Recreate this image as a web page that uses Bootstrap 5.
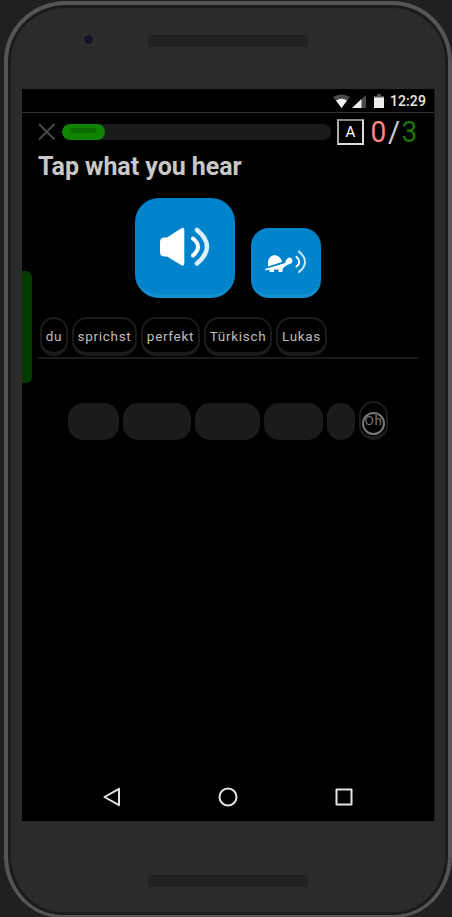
<!DOCTYPE html>
<html lang="en">
<head>
<meta charset="utf-8">
<meta name="viewport" content="width=device-width, initial-scale=1">
<title>Tap what you hear</title>
<link href="https://cdn.jsdelivr.net/npm/bootstrap@5.3.0/dist/css/bootstrap.min.css" rel="stylesheet">
<style>
body{background:#202022;font-family:Roboto,"Liberation Sans",sans-serif;width:452px;height:917px;overflow:hidden}
svg{display:block;flex:none}
.device{width:448px;height:917px;margin:1px 0 0 4px;border:4px solid #555;border-bottom-width:3px;border-radius:62px 60px 58px 58px / 60px 60px 62px 62px;background:#2b2b2b;box-shadow:inset 0 0 0 3px #1b1b1b;padding:0 14px}
.bezel-top{height:84px;padding:30px 0 0 126px}
.bezel-bottom{height:93px;padding:54px 0 0 126px}
.lens{left:72px;top:30px;width:9px;height:9px;background:#15112a;box-shadow:0 0 3px 2px #302f2d}
.slot{width:160px;height:12px;background:#212121;border-radius:1px}
.screen{width:413px;height:732px;background:#000;border-right:1px solid #1c1c1c}
.status{height:24px;border-bottom:1px solid #303030;padding-right:8px;color:#e8e8e8;font-size:14px;font-weight:500;line-height:24px}
.status svg{margin-top:2px}
.clock{padding-top:1px;letter-spacing:.1px}
.topbar{height:38px;padding:0 16px}
.closer{margin-top:-1px}
.lesson-progress{width:269px;height:16px;background:#1b1b1b;border-radius:8px;margin-left:6px}
.lesson-progress .progress-bar{background:#108500;border-radius:8px;padding:4px 8px;justify-content:flex-start}
.shine{height:5px;border-radius:3px;background:#0c6e00}
.key{width:27px;height:26px;border:2px solid #ddd;border-top-color:#888;border-left-color:#aaa;color:#fff;font-size:15px;margin-left:6px}
.score{font-size:29.5px;line-height:30px;height:30px;color:#ccc;margin-left:6px;width:48px}
.score span{display:block}
.wrong{color:#ff8585;transform:scaleX(.95)}.right{color:#1e7504;transform:scaleX(.95)}
.prompt{font-size:25px;font-weight:700;line-height:30px;letter-spacing:-.05px;color:#c8c8c8;margin:1px 16px 0;height:46px;white-space:nowrap}
.sounds{height:100px;gap:16px;padding-left:113px}
.sound,.sound-slow{background:#0284cc;border:0;border-bottom:4px solid #128fd1;padding:0}
.sound{width:100px;height:100px;border-radius:24px}
.sound-slow{width:70px;height:70px;border-radius:18px}
.answer{height:42px;margin:19px 16px 0;padding:0 2px;gap:4px;border-bottom:2px solid #1b1b1b}
.word{height:39px;border:2px solid #1b1b1b;border-bottom-width:4px;border-radius:15px;background:#000;color:#bdbdbd;font-size:13.5px;line-height:33px;padding:1px 0 0;text-align:center;letter-spacing:.7px;white-space:nowrap}
.word-fading{color:#777}
.bank{gap:4px;margin:42px 0 0 46px}
.slot-used{height:37px;border-radius:15px;background:#1b1b1b}
.w28{width:28px}.w29{width:29px}.w51{width:51px}.w59{width:59px}.w65{width:65px}.w68{width:68px}
.touch{left:1px;top:9px;width:23px;height:23px;border:2px solid #777}
.side-tab{left:0;top:182px;width:10px;height:112px;background:#003b00;border-radius:0 6px 6px 0}
.navkeys{height:48px;padding:0 80px}
</style>
</head>
<body>
<div class="device position-relative">
  <div class="bezel-top"><div class="lens position-absolute rounded-circle ms-1"></div><div class="slot"></div></div>
  <main class="screen position-relative d-flex flex-column">
    <div class="side-tab position-absolute"></div>
    <div class="status d-flex justify-content-end align-items-center">
      <svg width="57" height="16" viewBox="0 0 57 16"><path d="M0 3Q8.500-2 17 3L8.500 14Z" fill="#4a4a4a"/><path d="M3 6.500Q8.500 3 14 6.500L8.500 14Z" fill="#eee"/><path d="M19 14L33 1V14Z" fill="#4a4a4a"/><path d="M19 14L28.500 5V14Z" fill="#eee"/><path d="M41 4V2h3V0h4v2h3v2Z" fill="#555"/><path d="M41 3.500h10V14H41Z" fill="#eee"/></svg>
      <span class="clock">12:29</span>
    </div>
    <div class="topbar d-flex align-items-center">
      <svg class="closer" width="18" height="18" viewBox="0 0 18 18" stroke="#4b4b4b" stroke-width="1.800" stroke-linecap="round"><path d="M1.500 1.500L16 16M16 1.500L1.500 16"/></svg>
      <div class="lesson-progress progress flex-shrink-0"><div class="progress-bar" style="width:16%"><div class="shine"></div></div></div>
      <div class="key d-flex align-items-center justify-content-center flex-shrink-0">A</div>
      <div class="score d-flex justify-content-between flex-shrink-0"><span class="wrong">0</span><span>/</span><span class="right">3</span></div>
    </div>
    <h1 class="prompt">Tap what you hear</h1>
    <div class="sounds d-flex align-items-end">
      <button class="sound" aria-label="Play"><svg width="100" height="96" viewBox="0 0 100 96" fill="none" stroke-linecap="round"><path d="M25 44Q25 39.500 29.500 39.500H32L46 30.500Q49.300 28.500 49.300 32V65Q49.300 69 46 67L32 58.500H29.500Q25 58.500 25 54Z" fill="#fff"/><path d="M58 40.500Q68 48.500 58 57.500" stroke="#fff" stroke-width="4"/><path d="M62 32Q82 48.500 62 65.500" stroke="#dceefa" stroke-width="4.500"/></svg></button>
      <button class="sound-slow" aria-label="Play slowly"><svg width="70" height="66" viewBox="0 0 70 66" fill="none" stroke-linecap="round"><path d="M17 38.500V34C18 25 29 25 31 34Z" fill="#fff"/><path d="M14.500 41L19 40L34 34.500L35.500 31.500Q39 27.500 41.300 31.500Q42 36 37 36.500L33 39L31.500 41.500V44H27.500V41.500H23V44H18.500V41.500H15Z" fill="#fff"/><path d="M16 40L34 34.600" stroke="#0284cc" stroke-width="1"/><path d="M15 41.500L33 36.500" stroke="#fff" stroke-width="1.500"/><path d="M45.500 29Q51 34 45.500 38.500" stroke="#fff" stroke-width="2"/><path d="M48 23.500Q60 34 48 44" stroke="#cfe8f7" stroke-width="2"/></svg></button>
    </div>
    <div class="answer d-flex">
      <button class="word w28">du</button><button class="word w65">sprichst</button><button class="word w59">perfekt</button><button class="word w68">Türkisch</button><button class="word w51">Lukas</button>
    </div>
    <div class="bank d-flex align-items-end">
      <div class="slot-used w51"></div><div class="slot-used w68"></div><div class="slot-used w65"></div><div class="slot-used w59"></div><div class="slot-used w28"></div>
      <button class="word word-fading w29 position-relative">Oh<span class="touch position-absolute rounded-circle"></span></button>
    </div>
    <nav class="navkeys d-flex justify-content-between align-items-center mt-auto">
      <svg width="20" height="20" viewBox="0 0 20 20" fill="none" stroke="#e4e4e4" stroke-width="2" stroke-linejoin="round"><path d="M2.500 10L17 1.800V18.200Z"/></svg>
      <svg width="20" height="20" viewBox="0 0 20 20" fill="none" stroke="#e4e4e4" stroke-width="2"><circle cx="10" cy="10" r="8.500"/></svg>
      <svg width="20" height="20" viewBox="0 0 20 20" fill="none" stroke="#e4e4e4" stroke-width="2" stroke-linejoin="round"><path d="M2.500 2.500H17.500V17.500H2.500Z"/></svg>
    </nav>
  </main>
  <div class="bezel-bottom"><div class="slot"></div></div>
</div>
<script src="https://cdn.jsdelivr.net/npm/bootstrap@5.3.0/dist/js/bootstrap.bundle.min.js"></script>
</body>
</html>
